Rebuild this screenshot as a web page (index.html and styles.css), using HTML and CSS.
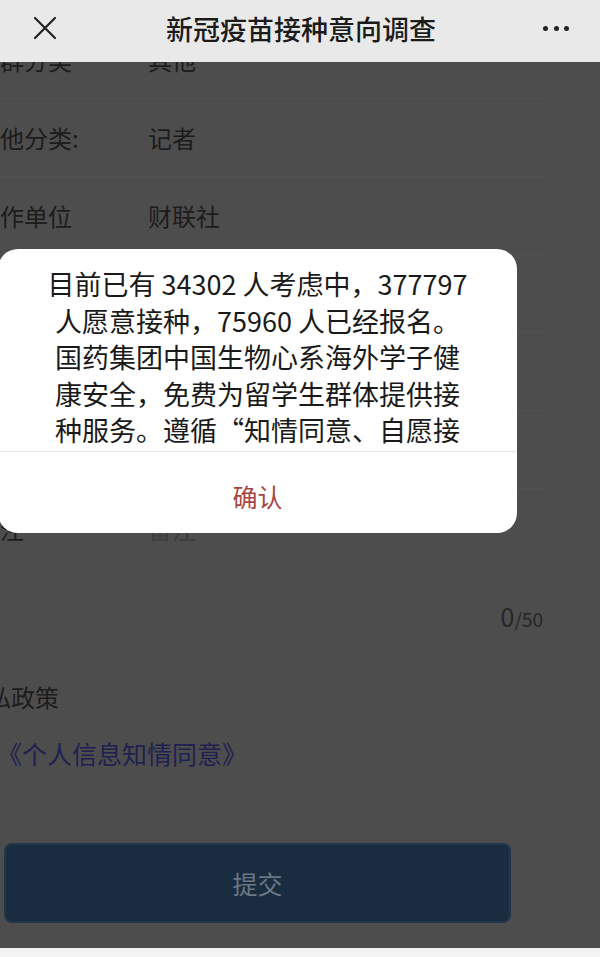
FILE: index.html
```html
<!DOCTYPE html>
<html lang="zh-CN">
<head>
  <meta charset="UTF-8">
  <title>新冠疫苗接种意向调查</title>
  <link rel="stylesheet" href="styles.css">
</head>
<body>

  <!-- Top bar -->
  <div class="topbar">
    <span class="topbar-btn close">
      <svg width="24" height="24" viewBox="0 0 24 24">
        <path d="M2 2 L22 22 M22 2 L2 22" stroke="#222" stroke-width="2.2" stroke-linecap="round" fill="none"/>
      </svg>
    </span>
    <h1 class="topbar-title">新冠疫苗接种意向调查</h1>
    <span class="topbar-btn more"><i></i><i></i><i></i></span>
  </div>

  <!-- Form page (scrolled, dimmed behind the dialog) -->
  <div class="page">
    <div class="form">
      <div class="row"><span class="label">人群分类</span><span class="value">其他</span></div>
      <div class="row"><span class="label">其他分类:</span><span class="value">记者</span></div>
      <div class="row"><span class="label">工作单位</span><span class="value">财联社</span></div>
      <!-- rows hidden under the dialog -->
      <div class="row"></div>
      <div class="row"></div>
      <div class="row"></div>
      <div class="row remark"><span class="label">备注</span><span class="value placeholder">备注</span></div>
      <div class="counter"><span class="count">0</span>/50</div>

      <div class="privacy">
        <h2>隐私政策</h2>
        <a class="privacy-link">《个人信息知情同意》</a>
      </div>

      <button class="submit" disabled>提交</button>
    </div>
  </div>
  <div class="bottombar"></div>

  <!-- Dialog -->
  <div class="dialog">
    <div class="dialog-body">
      <p>目前已有 34302 人考虑中，377797 人愿意接种，75960 人已经报名。国药集团中国生物心系海外学子健康安全，免费为留学生群体提供接种服务。遵循“知情同意、自愿接种”的原则，接种前请仔细阅读相关说明。</p>
    </div>
    <div class="dialog-footer">确认</div>
  </div>

</body>
</html>
```

FILE: styles.css
```css
/* Global */
body {
  margin: 0;
  width: 600px;
  height: 957px;
  overflow: hidden;
  font-family: "Noto Sans CJK SC", sans-serif;
  background: #4d4d4d;
}

/* Top bar */
.topbar {
  height: 62px;
  box-sizing: border-box;
  padding: 0 31px 6px 33px;
  display: flex;
  align-items: center;
  justify-content: space-between;
  background: #e9e9e9;
}
.topbar-btn {
  width: 26px;
  display: flex;
  align-items: center;
}
.close svg {
  display: block;
}
.more {
  justify-content: space-between;
}
.more i {
  width: 5px;
  height: 5px;
  border-radius: 50%;
  background: #222;
}
.topbar-title {
  margin: 0;
  font-size: 27px;
  font-weight: 500;
  color: #1b1b1b;
}

/* Form page */
.page {
  height: 886px;
  overflow: hidden;
}
.form {
  margin: -41px 0 0 -24px;
}
.row {
  height: 78px;
  box-sizing: border-box;
  margin-right: 55px;
  display: flex;
  align-items: center;
  border-bottom: 1px solid #515151;
  font-size: 24px;
  color: #1c1c1c;
}
.row.remark {
  border-bottom: none;
}
.label {
  width: 172px;
  flex: none;
}
.placeholder {
  color: #3c3c3c;
}
.counter {
  margin: 34px 57px 0 0;
  text-align: right;
  font-size: 19px;
  line-height: 30px;
  color: #262626;
}
.count {
  font-size: 25px;
}

/* Privacy */
.privacy h2 {
  margin: 46px 0 0 -13px;
  font-size: 24px;
  font-weight: normal;
  line-height: 34px;
  color: #1c1c1c;
}
.privacy-link {
  display: block;
  margin: 22px 0 0 21px;
  font-size: 25px;
  line-height: 34px;
  color: #1e2150;
}

/* Submit button */
.submit {
  display: block;
  margin: 73px 0 0 28px;
  width: 507px;
  height: 80px;
  border: 2px solid #21364b;
  border-radius: 8px;
  background: #1a2d40;
  color: #6b7785;
  font-family: inherit;
  font-size: 25px;
}

.bottombar {
  height: 9px;
  background: #f3f3f3;
}

/* Dialog */
.dialog {
  position: fixed;
  left: -2px;
  top: 249px;
  width: 519px;
  background: #fff;
  border-radius: 20px;
  overflow: hidden;
}
.dialog-body {
  height: 202px;
  box-sizing: border-box;
  padding: 17px 45px 0;
  overflow: hidden;
}
.dialog-body p {
  margin: 0;
  font-size: 27px;
  line-height: 36.5px;
  text-align: center;
  color: #1a1a1a;
}
.dialog-footer {
  height: 82px;
  box-sizing: border-box;
  padding-top: 6px;
  border-top: 1px solid #e6e6e6;
  display: flex;
  align-items: center;
  justify-content: center;
  font-size: 25px;
  color: #a84646;
}
```
